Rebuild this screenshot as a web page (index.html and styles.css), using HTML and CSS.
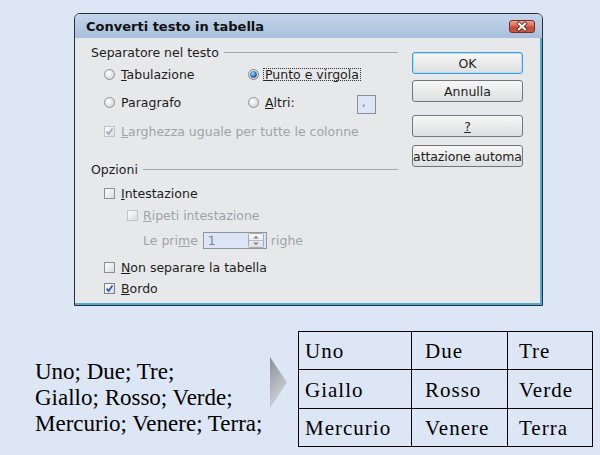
FILE: index.html
```html
<!DOCTYPE html>
<html lang="it">
<head>
<meta charset="utf-8">
<title>Converti testo in tabella</title>
<link rel="stylesheet" href="styles.css">
</head>
<body>
<svg class="defs" width="0" height="0" aria-hidden="true">
  <defs>
    <radialGradient id="rg" cx="0.4" cy="0.35" r="0.7">
      <stop offset="0" stop-color="#ffffff"/>
      <stop offset="1" stop-color="#cfd2d6"/>
    </radialGradient>
    <radialGradient id="rb" cx="0.35" cy="0.3" r="0.8">
      <stop offset="0" stop-color="#b8e2ff"/>
      <stop offset="0.5" stop-color="#3c94dc"/>
      <stop offset="1" stop-color="#12509c"/>
    </radialGradient>
    <linearGradient id="cg" x1="0" y1="0" x2="1" y2="1">
      <stop offset="0" stop-color="#ffffff"/>
      <stop offset="1" stop-color="#d8dadd"/>
    </linearGradient>
    <linearGradient id="xg" x1="0" y1="0" x2="0" y2="1">
      <stop offset="0" stop-color="#f0a898"/>
      <stop offset="0.45" stop-color="#d86c58"/>
      <stop offset="0.55" stop-color="#c04a36"/>
      <stop offset="1" stop-color="#c85a44"/>
    </linearGradient>
    <linearGradient id="sg" x1="0" y1="0" x2="0" y2="1">
      <stop offset="0" stop-color="#f8f8f8"/>
      <stop offset="1" stop-color="#dcdee0"/>
    </linearGradient>
    <linearGradient id="ag" x1="0" y1="0" x2="0.4" y2="1">
      <stop offset="0" stop-color="#8a8f98"/>
      <stop offset="1" stop-color="#d2d5db"/>
    </linearGradient>
  </defs>
</svg>

<div class="dialog">
  <div class="titlebar">
    <span class="title">Converti testo in tabella</span>
    <svg class="close" width="26" height="13" viewBox="0 0 26 13">
      <rect x="0.5" y="0.5" width="25" height="12" rx="2.5" fill="url(#xg)" stroke="#7c2e24"/>
      <path d="M9.8 3.6 L16.2 9.4 M16.2 3.6 L9.8 9.4" stroke="#6a2a22" stroke-width="3.6" stroke-linecap="square" fill="none"/>
      <path d="M9.8 3.6 L16.2 9.4 M16.2 3.6 L9.8 9.4" stroke="#ffffff" stroke-width="2" stroke-linecap="square" fill="none"/>
    </svg>
  </div>

  <div class="dialog-body">
    <div class="left-col">
      <div class="group-title">Separatore nel testo</div>

      <div class="row indent mt2">
        <div class="cell first">
          <svg class="radio" width="11" height="11" viewBox="0 0 11 11"><circle cx="5.5" cy="5.5" r="5" fill="url(#rg)" stroke="#8d9196"/></svg>
          <span><u>T</u>abulazione</span>
        </div>
        <div class="cell">
          <svg class="radio" width="11" height="11" viewBox="0 0 11 11"><circle cx="5.5" cy="5.5" r="5" fill="url(#rg)" stroke="#7f848a"/><circle cx="5.5" cy="5.5" r="3.1" fill="url(#rb)" stroke="#1c4a8a" stroke-width="0.6"/></svg>
          <span class="focus"><u>P</u>unto e virgola</span>
        </div>
      </div>

      <div class="row indent mt8">
        <div class="cell first">
          <svg class="radio" width="11" height="11" viewBox="0 0 11 11"><circle cx="5.5" cy="5.5" r="5" fill="url(#rg)" stroke="#8d9196"/></svg>
          <span>Para<u>g</u>rafo</span>
        </div>
        <div class="cell grow">
          <svg class="radio" width="11" height="11" viewBox="0 0 11 11"><circle cx="5.5" cy="5.5" r="5" fill="url(#rg)" stroke="#8d9196"/></svg>
          <span><u>A</u>ltri:</span>
          <span class="small-input">,</span>
        </div>
      </div>

      <div class="row indent mt9 disabled">
        <svg class="check" width="11" height="11" viewBox="0 0 11 11"><rect x="0.5" y="0.5" width="10" height="10" fill="url(#cg)" stroke="#c0c3c7"/><path d="M2.6 5.6 L4.6 8.1 L8.5 2.6" stroke="#a2abb8" stroke-width="1.7" fill="none"/></svg>
        <span><u>L</u>arghezza uguale per tutte le colonne</span>
      </div>

      <div class="group-title mt18">Opzioni</div>

      <div class="row indent mt4">
        <svg class="check" width="11" height="11" viewBox="0 0 11 11"><rect x="0.5" y="0.5" width="10" height="10" fill="url(#cg)" stroke="#8b8e92"/></svg>
        <span><u>I</u>ntestazione</span>
      </div>

      <div class="row indent2 mt2 disabled">
        <svg class="check" width="11" height="11" viewBox="0 0 11 11"><rect x="0.5" y="0.5" width="10" height="10" fill="url(#cg)" stroke="#c0c3c7"/></svg>
        <span><u>R</u>ipeti intestazione</span>
      </div>

      <div class="row indent3 mt5 disabled">
        <span>Le pri<u>m</u>e</span>
        <span class="spin">
          <span class="spin-value">1</span>
          <svg class="spin-btn" width="16" height="15" viewBox="0 0 16 15">
            <rect x="0.5" y="0.5" width="15" height="14" rx="1" fill="url(#sg)" stroke="#a6abb1"/>
            <line x1="1" y1="7.5" x2="15" y2="7.5" stroke="#b4b8bd"/>
            <path d="M5.2 5.4 L8 2.8 L10.8 5.4 Z" fill="#80858c"/>
            <path d="M5.2 9.6 L8 12.2 L10.8 9.6 Z" fill="#80858c"/>
          </svg>
        </span>
        <span>righe</span>
      </div>

      <div class="row indent mt7">
        <svg class="check" width="11" height="11" viewBox="0 0 11 11"><rect x="0.5" y="0.5" width="10" height="10" fill="url(#cg)" stroke="#8b8e92"/></svg>
        <span><u>N</u>on separare la tabella</span>
      </div>

      <div class="row indent mt1">
        <svg class="check" width="11" height="11" viewBox="0 0 11 11"><rect x="0.5" y="0.5" width="10" height="10" fill="url(#cg)" stroke="#7e8186"/><path d="M2.6 5.6 L4.6 8.1 L8.5 2.6" stroke="#2a5cb2" stroke-width="1.7" fill="none"/></svg>
        <span><u>B</u>ordo</span>
      </div>
    </div>

    <div class="right-col">
      <div class="btn default">OK</div>
      <div class="btn mt6">Annulla</div>
      <div class="btn mt13"><u>?</u></div>
      <div class="btn mt8 tight">attazione automa</div>
    </div>
  </div>
</div>

<div class="sample">
  <div class="plain-text">
    <div>Uno; Due; Tre;</div>
    <div>Giallo; Rosso; Verde;</div>
    <div>Mercurio; Venere; Terra;</div>
  </div>
  <svg class="arrow" width="17" height="51" viewBox="0 0 17 51"><polygon points="0,0 17,25.5 0,51" fill="url(#ag)"/></svg>
  <table class="result">
    <tr class="r1"><td class="c1">Uno</td><td class="c2">Due</td><td class="c3">Tre</td></tr>
    <tr class="r2"><td class="c1">Giallo</td><td class="c2">Rosso</td><td class="c3">Verde</td></tr>
    <tr class="r3"><td class="c1">Mercurio</td><td class="c2">Venere</td><td class="c3">Terra</td></tr>
  </table>
</div>
</body>
</html>
```

FILE: styles.css
```css
html, body {
  margin: 0;
  padding: 0;
}
body {
  width: 600px;
  height: 455px;
  overflow: hidden;
  background: #dce6f5;
  font-family: "DejaVu Sans", sans-serif;
}
.defs {
  display: block;
  width: 0;
  height: 0;
  overflow: hidden;
}

/* dialog */
.dialog {
  margin: 13px 0 0 74px;
  width: 469px;
  box-sizing: border-box;
  border: 1px solid #2c2f34;
  border-radius: 6px 6px 0 0;
  overflow: hidden;
  background: #e7e8ea;
}
.titlebar {
  height: 24px;
  display: flex;
  align-items: center;
  justify-content: space-between;
  padding: 0 7px 0 11px;
  background: linear-gradient(#c4d5ea, #a8bfdc);
}
.title {
  font-weight: bold;
  font-size: 13px;
  color: #111;
}
.close {
  display: block;
  margin-top: 1px;
}
.dialog-body {
  display: flex;
  gap: 14px;
  height: 267px;
  box-sizing: border-box;
  padding: 0 15px 0 16px;
  border-right: 2px solid #4fa9d9;
  border-bottom: 2px solid #4fa9d9;
  font-size: 12.5px;
  color: #1c1c1c;
}
.left-col {
  width: 307px;
  padding-top: 4px;
  display: flex;
  flex-direction: column;
}
.right-col {
  width: 111px;
  padding-top: 14px;
  display: flex;
  flex-direction: column;
}

.group-title {
  display: flex;
  align-items: center;
  height: 20px;
  white-space: nowrap;
}
.group-title::after {
  content: "";
  flex: 1;
  border-top: 1px solid #a4a7ab;
  margin-left: 5px;
}

.row {
  display: flex;
  align-items: center;
  height: 20px;
  white-space: nowrap;
}
.indent { padding-left: 13px; }
.indent2 { padding-left: 36px; }
.indent3 { padding-left: 52px; }

.cell {
  display: flex;
  align-items: center;
}
.cell.first { width: 144px; }
.cell.grow { flex: 1; }

.radio, .check {
  display: block;
  flex: none;
  margin-right: 6px;
}
.indent2 .check { margin-right: 5px; }

.focus {
  display: inline-block;
  line-height: 11px;
  outline: 1px dotted #333;
  padding: 0 1px;
  margin-left: -1px;
}

.small-input {
  margin-left: auto;
  margin-right: 22px;
  margin-top: 4px;
  width: 19px;
  height: 19px;
  box-sizing: border-box;
  border: 1px solid #8a9099;
  background: #dce5f5;
  font-size: 11px;
  color: #666;
  padding-left: 4px;
  line-height: 14px;
}

.disabled {
  color: #9fa3a8;
}

.spin {
  display: flex;
  align-items: center;
  width: 64px;
  height: 17px;
  box-sizing: border-box;
  border: 1px solid #8e96a0;
  background: #dce5f5;
  margin: 0 4px 0 5px;
  padding-right: 2px;
}
.spin-value {
  flex: 1;
  padding-left: 4px;
  color: #7f858c;
}
.spin-btn {
  display: block;
}

/* buttons */
.btn {
  height: 22px;
  box-sizing: border-box;
  border: 1px solid #72767b;
  border-radius: 3px;
  background: linear-gradient(#f7f7f7, #dedfe0);
  display: flex;
  align-items: center;
  justify-content: center;
  color: #1e1e1e;
  white-space: nowrap;
}
.btn.default {
  border-color: #3a9fdc;
  box-shadow: inset 0 0 0 1px #b8dcf4;
}
.btn.tight {
  letter-spacing: -0.1px;
}

.mt1 { margin-top: 1px; }
.mt2 { margin-top: 2px; }
.mt4 { margin-top: 4px; }
.mt5 { margin-top: 5px; }
.mt6 { margin-top: 6px; }
.mt7 { margin-top: 7px; }
.mt8 { margin-top: 8px; }
.mt9 { margin-top: 9px; }
.mt13 { margin-top: 13px; }
.mt18 { margin-top: 18px; }

/* sample area */
.sample {
  display: flex;
  align-items: flex-start;
  margin-top: 25px;
  font-family: "Liberation Serif", "Times New Roman", serif;
  color: #000;
}
.plain-text {
  margin-left: 35px;
  margin-top: 28px;
  width: 235px;
  font-size: 23px;
  line-height: 26px;
  white-space: nowrap;
}
.arrow {
  display: block;
  flex: none;
  margin-top: 26px;
}
.result {
  margin-left: 11px;
  border-collapse: collapse;
  table-layout: fixed;
  width: 293px;
  border: 1px solid #000;
  font-size: 21px;
  letter-spacing: 1px;
}
.result td {
  border: 1px solid #000;
  padding: 2px 0 0 0;
  vertical-align: middle;
  white-space: nowrap;
}
.result .r1 td, .result .r3 td { height: 35px; }
.result .r2 td { height: 36px; }
.result .c1 { width: 106px; padding-left: 6px; }
.result .c2 { width: 82px; padding-left: 13px; }
.result .c3 { width: 73px; padding-left: 11px; }
```
